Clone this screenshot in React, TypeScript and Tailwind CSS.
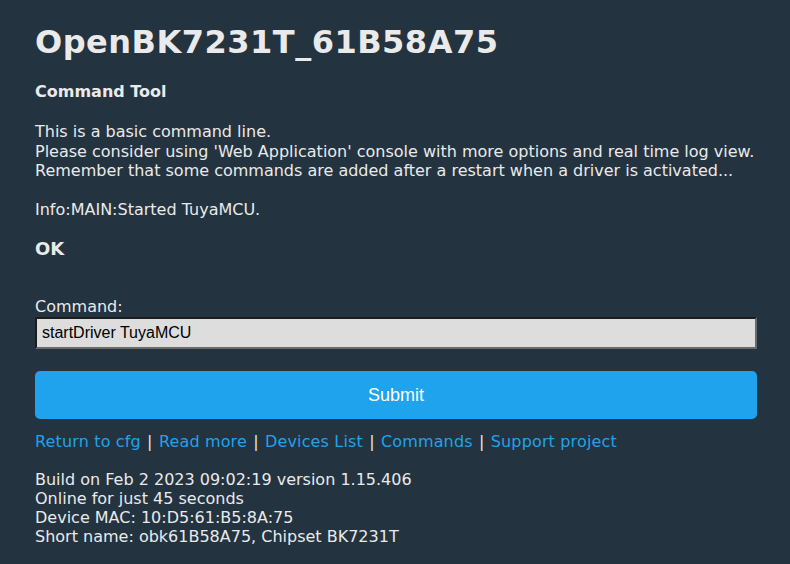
const links = ['Return to cfg', 'Read more', 'Devices List', 'Commands', 'Support project']

export default function App() {
  return (
    <div className="min-h-[564px] bg-[#233340] px-[35px] pt-[20px] font-['DejaVu_Sans',sans-serif] text-[#eaeaea]">
      {/* Header */}
      <h1 className="text-[32px] font-bold leading-[44px] tracking-[0.5px]">OpenBK7231T_61B58A75</h1>
      <h4 className="mt-[18px] text-[16px] font-bold leading-[20px]">Command Tool</h4>

      {/* Intro */}
      <div className="mt-[20px] text-[16px] leading-[19.5px]">
        <p>This is a basic command line.</p>
        <p>Please consider using 'Web Application' console with more options and real time log view.</p>
        <p>Remember that some commands are added after a restart when a driver is activated...</p>
        <p className="mt-[19px]">Info:MAIN:Started TuyaMCU.</p>
      </div>
      <h3 className="mt-[18px] text-[18px] font-bold leading-[24px]">OK</h3>

      {/* Form */}
      <form className="mt-[36px]" onSubmit={(e) => e.preventDefault()}>
        <label className="block text-[16px] leading-[19px]">Command:</label>
        <input
          defaultValue="startDriver TuyaMCU"
          className="mt-[1px] block h-[32px] w-[722px] border-2 border-t-[#1c1c1c] border-l-[#1c1c1c] border-r-[#6a6a6a] border-b-[#6a6a6a] bg-[#dddddd] px-[5px] font-['Liberation_Sans',sans-serif] text-[16px] text-black outline-none"
        />
        <button
          type="submit"
          className="mt-[22px] block h-[48px] w-[722px] rounded-[5px] bg-[#1fa3ec] font-['Liberation_Sans',sans-serif] text-[18px] text-white"
        >
          Submit
        </button>
      </form>

      {/* Links */}
      <div className="mt-[13px] text-[16px] leading-[20px] tracking-[0.15px]">
        {links.map((l, i) => (
          <span key={l}>
            {i > 0 && <span className="mx-[1px] text-[#eaeaea]"> | </span>}
            <a href="#" className="text-[#1fa3ec]">{l}</a>
          </span>
        ))}
      </div>

      {/* Footer info */}
      <div className="mt-[18px] text-[16px] leading-[19px]">
        <p>Build on Feb 2 2023 09:02:19 version 1.15.406</p>
        <p>Online for just 45 seconds</p>
        <p>Device MAC: 10:D5:61:B5:8A:75</p>
        <p>Short name: obk61B58A75, Chipset BK7231T</p>
      </div>
    </div>
  )
}
